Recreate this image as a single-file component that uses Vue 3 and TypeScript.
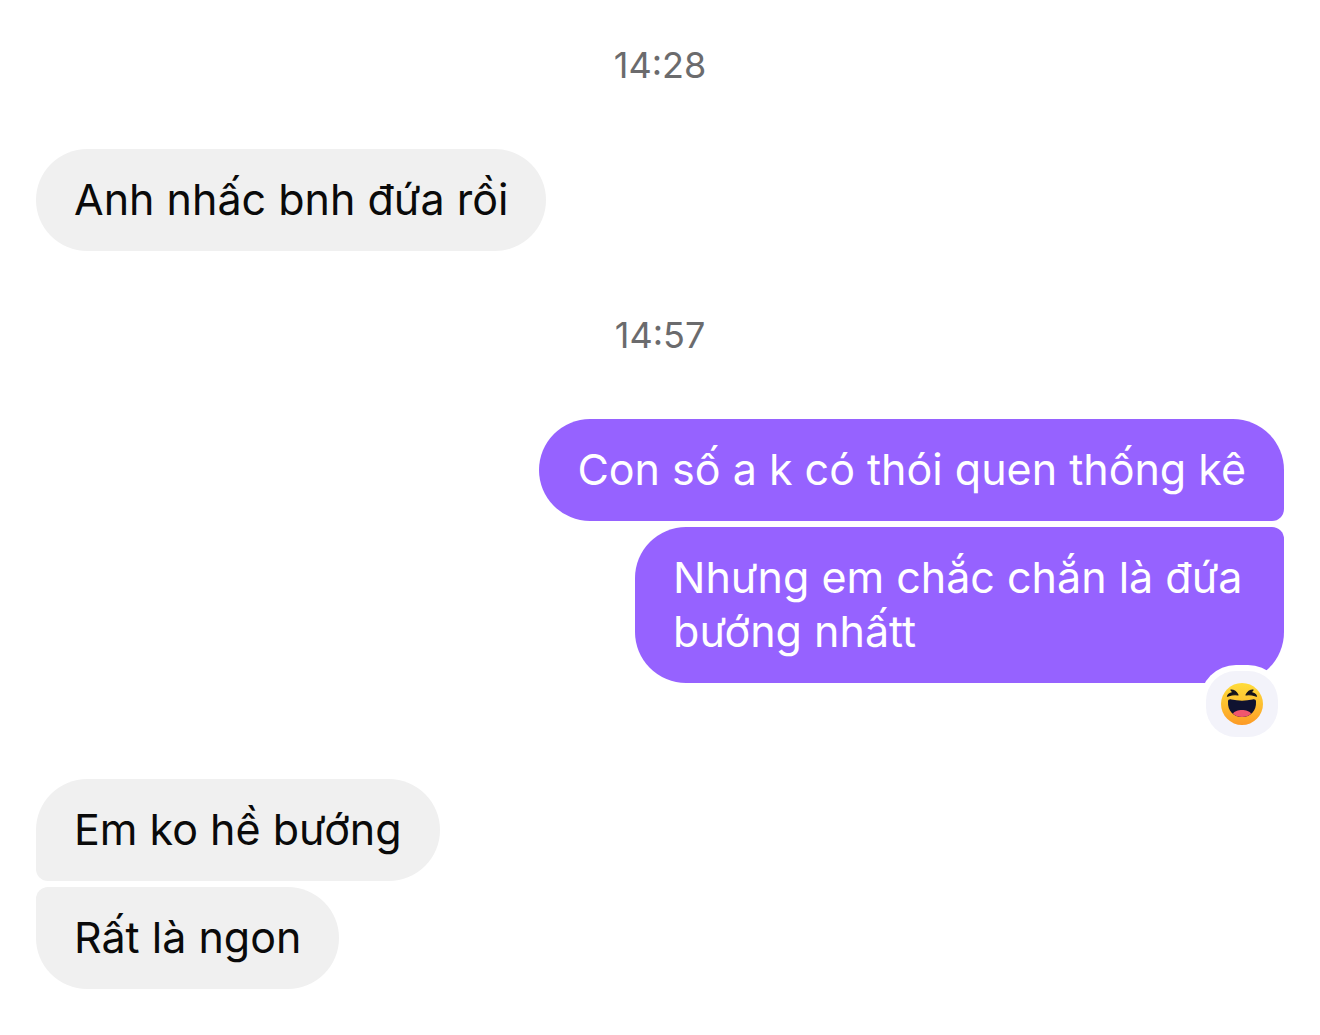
<script setup lang="ts">
interface Message {
  id: number
  text: string
  from: 'them' | 'me'
  join?: 'first' | 'last'
  reaction?: boolean
}

interface Group {
  id: number
  time?: string
  messages: Message[]
}

const groups: Group[] = [
  { id: 1, time: '14:28', messages: [{ id: 1, from: 'them', text: 'Anh nhấc bnh đứa rồi' }] },
  {
    id: 2,
    time: '14:57',
    messages: [
      { id: 2, from: 'me', join: 'first', text: 'Con số a k có thói quen thống kê' },
      { id: 3, from: 'me', join: 'last', text: 'Nhưng em chắc chắn là đứa bướng nhấtt', reaction: true },
    ],
  },
  {
    id: 3,
    messages: [
      { id: 4, from: 'them', join: 'first', text: 'Em ko hề bướng' },
      { id: 5, from: 'them', join: 'last', text: 'Rất là ngon' },
    ],
  },
]
</script>

<template>
  <main class="chat">
    <section v-for="group in groups" :key="group.id" class="group">
      <time v-if="group.time" class="time">{{ group.time }}</time>
      <div v-for="m in group.messages" :key="m.id" class="bubble" :class="[m.from, m.join]">
        <p class="text">{{ m.text }}</p>
        <button v-if="m.reaction" class="reaction" type="button" aria-label="Haha">
          <svg class="emoji" viewBox="0 0 42 42" aria-hidden="true">
            <defs>
              <linearGradient id="face" x1="0" y1="0" x2="0" y2="1">
                <stop offset="0" stop-color="#ffdc3a" />
                <stop offset="0.5" stop-color="#fdc030" />
                <stop offset="1" stop-color="#fd9a26" />
              </linearGradient>
            </defs>
            <circle cx="21" cy="21" r="21" fill="url(#face)" />
            <path d="M7 18.500C7 16.500 8.500 16 10.500 16.500C17 18 25 18 31.500 16.500C33.500 16 35 16.500 35 18.500C35.500 28 29.500 34 21 34S6.500 28 7 18.500Z" fill="#0f1230" />
            <path d="M12 30.800C14.500 25.800 27.500 25.800 30 30.800C27.500 33 24.500 34 21 34S14.500 33 12 30.800Z" fill="#f0566e" />
            <path d="M10 7C13 7 15.500 8.800 17 12C13.500 11.300 10 12 6.500 13.200C7.500 11 9.500 10 12 9.700C11.500 8.700 11 8 10 7ZM32 7C29 7 26.500 8.800 25 12C28.500 11.300 32 12 35.500 13.200C34.500 11 32.500 10 30 9.700C30.500 8.700 31 8 32 7Z" fill="#15141c" stroke="#15141c" stroke-width="1.200" stroke-linejoin="round" />
          </svg>
        </button>
      </div>
    </section>
  </main>
</template>

<style>
body {
  margin: 0;
  background: #fff;
}
</style>

<style scoped>
.chat {
  display: flex;
  flex-direction: column;
  padding: 29px 36px 46px;
  font-family: Inter, "Noto Sans", sans-serif;
}
.group {
  display: flex;
  flex-direction: column;
  gap: 6px;
}
.group + .group {
  margin-top: 48px;
}
.group:last-child {
  margin-top: 96px;
}
.time {
  align-self: center;
  margin-bottom: 42px;
  font-size: 36px;
  line-height: 72px;
  color: #6b6b6d;
}
.bubble {
  position: relative;
  box-sizing: border-box;
  padding: 23px 38px 25px;
  border-radius: 51px;
  font-size: 43px;
  line-height: 54px;
}
.text {
  margin: 0;
}
.them {
  align-self: flex-start;
  background: #f0f0f0;
  color: #0a0a0a;
}
.me {
  align-self: flex-end;
  background: #9662ff;
  color: #fff;
}
.me.first {
  border-bottom-right-radius: 12px;
}
.me.last {
  max-width: 52%;
  border-top-right-radius: 12px;
}
.them.first {
  border-bottom-left-radius: 12px;
}
.them.last {
  border-top-left-radius: 12px;
}
.reaction {
  position: absolute;
  right: 6px;
  bottom: -54px;
  display: grid;
  place-items: center;
  width: 72px;
  height: 66px;
  padding: 0;
  border: 0;
  border-radius: 30px;
  background: #f3f3fa;
  box-shadow: 0 0 0 6px #fff;
}
.emoji {
  width: 42px;
  height: 42px;
}
</style>
